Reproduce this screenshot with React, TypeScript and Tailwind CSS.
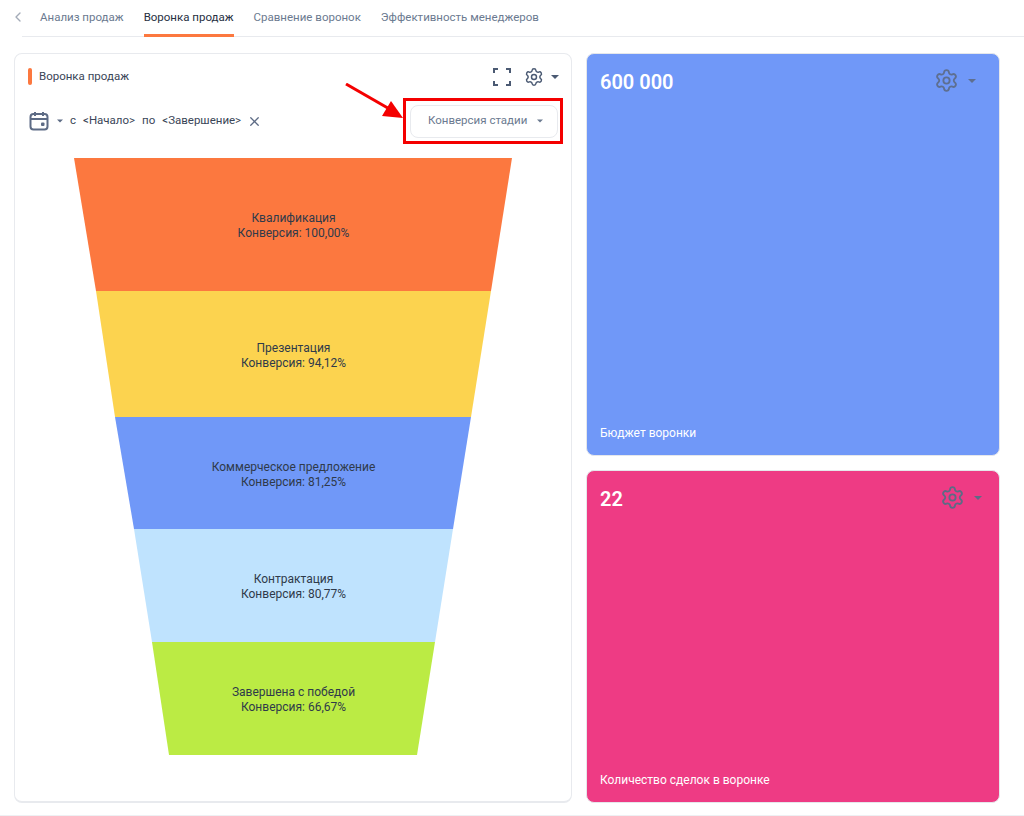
import { ChevronLeft, Settings, X } from 'lucide-react'

const tabs = [
  { label: 'Анализ продаж', active: false },
  { label: 'Воронка продаж', active: true },
  { label: 'Сравнение воронок', active: false },
  { label: 'Эффективность менеджеров', active: false },
]

const stages = [
  { name: 'Квалификация', conv: 'Конверсия: 100,00%', fill: '#fc783f', points: '74,0 512,0 491,133 96,133', y: 64, gap: 15 },
  { name: 'Презентация', conv: 'Конверсия: 94,12%', fill: '#fcd34f', points: '96,133 491,133 471,259 115,259', y: 194, gap: 15 },
  { name: 'Коммерческое предложение', conv: 'Конверсия: 81,25%', fill: '#7098f8', points: '115,259 471,259 453,371 134,371', y: 313, gap: 15 },
  { name: 'Контрактация', conv: 'Конверсия: 80,77%', fill: '#bfe3fe', points: '134,371 453,371 435,484 152,484', y: 425, gap: 15 },
  { name: 'Завершена с победой', conv: 'Конверсия: 66,67%', fill: '#bbeb44', points: '152,484 435,484 417,597 169,597', y: 538, gap: 15 },
]

function Caret({ className }: Readonly<{ className: string }>) {
  return <span className={`inline-block h-0 w-0 border-x-4 border-t-4 border-x-transparent ${className}`} />
}

function Corners() {
  return (
    <svg width="20" height="20" viewBox="0 0 20 20" fill="none" stroke="#4b5a73" strokeWidth="2">
      <path d="M2 6V2h4M14 2h4v4M18 14v4h-4M6 18H2v-4" />
    </svg>
  )
}

function CalendarIcon() {
  return (
    <svg width="20" height="20" viewBox="0 0 20 20" fill="none" stroke="#5d6b85" strokeWidth="2">
      <rect x="1.5" y="3" width="17" height="15.5" rx="3" />
      <path d="M1.5 8h17M6 1v4M14 1v4" />
      <rect x="12" y="11.5" width="3.5" height="3.5" rx="1" fill="#5d6b85" stroke="none" />
    </svg>
  )
}

function StatCard({
  value,
  label,
  className,
  controlsClass,
}: Readonly<{ value: string; label: string; className: string; controlsClass: string }>) {
  return (
    <div className={`flex flex-col justify-between rounded-lg border border-gray-200 pb-[14px] pl-[13px] pt-[14px] text-white ${className}`}>
      <div className="flex items-start justify-between">
        <span className="text-[20px] font-semibold leading-[28px]">{value}</span>
        <div className={`flex items-center gap-[9px] ${controlsClass}`}>
          <Settings size={25} strokeWidth={1.75} className="text-[#5d6b85]" />
          <Caret className="border-t-[#5d6b85]" />
        </div>
      </div>
      <span className="text-[12px] leading-[16px]">{label}</span>
    </div>
  )
}

export default function App() {
  return (
    <div className="h-[816px] w-[1024px] overflow-hidden bg-white font-['Roboto',sans-serif] text-[11.5px]">
      <div className="flex h-[37px] items-start">
        <ChevronLeft size={16} strokeWidth={2} className="ml-[10px] mt-[9px] text-[#a3abb8]" />
        <div className="ml-[-4px] flex h-[37px] flex-1 gap-[20px] border-b border-[#e8eaee] pl-[18px]">
          {tabs.map(t => (
            <div
              key={t.label}
              className={`flex h-[37px] items-center pb-[1px] ${t.active ? 'border-b-[3px] border-[#fc783f] pt-[3px] text-[#27303f]' : 'text-[#6b7a90]'}`}
            >
              {t.label}
            </div>
          ))}
        </div>
      </div>

      <div className="ml-[14px] mt-[16px] flex gap-[14px]">
        <div className="relative h-[750px] w-[558px] rounded-lg border border-[#e8eaee] border-b-2">
          <div className="flex h-[45px] items-center justify-between pl-[13px] pr-[12px]">
            <div className="flex items-center gap-[7px] text-[#3a4557]">
              <span className="h-[17px] w-[4px] rounded-sm bg-[#fc783f]" />
              Воронка продаж
            </div>
            <div className="flex items-center gap-[12px]">
              <Corners />
              <div className="flex items-center gap-[7px]">
                <Settings size={20} strokeWidth={1.75} className="text-[#4b5a73]" />
                <Caret className="border-t-[#4b5a73]" />
              </div>
            </div>
          </div>

          <div className="flex h-[44px] items-center justify-between pl-[14px] pr-[13px]">
            <div className="flex items-center text-[#3a4557]">
              <CalendarIcon />
              <Caret className="ml-[7px] scale-75 border-t-[#5d6b85]" />
              <span className="ml-[6px]">с</span>
              <span className="ml-[7px]">&lt;Начало&gt;</span>
              <span className="ml-[7px]">по</span>
              <span className="ml-[7px]">&lt;Завершение&gt;</span>
              <X size={15} strokeWidth={2} className="ml-[6px] text-[#5d6b85]" />
            </div>
            <div className="flex h-[33px] w-[148px] items-center justify-between rounded-lg border border-[#e8eaee] pl-[17px] pr-[13px] text-[#6b7a90]">
              Конверсия стадии
              <Caret className="scale-75 border-t-[#6b7a90]" />
            </div>
          </div>

          <svg width="558" height="600" viewBox="15 0 558 600" className="mt-[15px] block">
            {stages.map(s => (
              <g key={s.name}>
                <polygon points={s.points} fill={s.fill} />
                <text x="293.5" y={s.y} textAnchor="middle" fontSize="12" fill="#2f3a4a" fontFamily="Roboto, sans-serif">
                  <tspan x="293.5">{s.name}</tspan>
                  <tspan x="293.5" dy={s.gap}>{s.conv}</tspan>
                </text>
              </g>
            ))}
          </svg>

          <div className="absolute left-[388px] top-[44px] h-[46px] w-[160px] border-[3px] border-[#f40000]" />
          <svg width="62" height="40" viewBox="0 0 62 40" className="absolute left-[330px] top-[29px]">
            <path d="M1 1L48 28" stroke="#f40000" strokeWidth="3" />
            <path d="M58 35L37 33L46 18Z" fill="#f40000" />
          </svg>
        </div>

        <div className="flex w-[414px] flex-col gap-[14px]">
          <StatCard value="600 000" label="Бюджет воронки" className="h-[403px] bg-[#7098f8]" controlsClass="mr-[23px] opacity-90" />
          <StatCard value="22" label="Количество сделок в воронке" className="h-[333px] bg-[#ee3b84]" controlsClass="mr-[17px]" />
        </div>
      </div>

      <div className="mt-[12px] border-t border-[#eef0f3]" />
    </div>
  )
}
